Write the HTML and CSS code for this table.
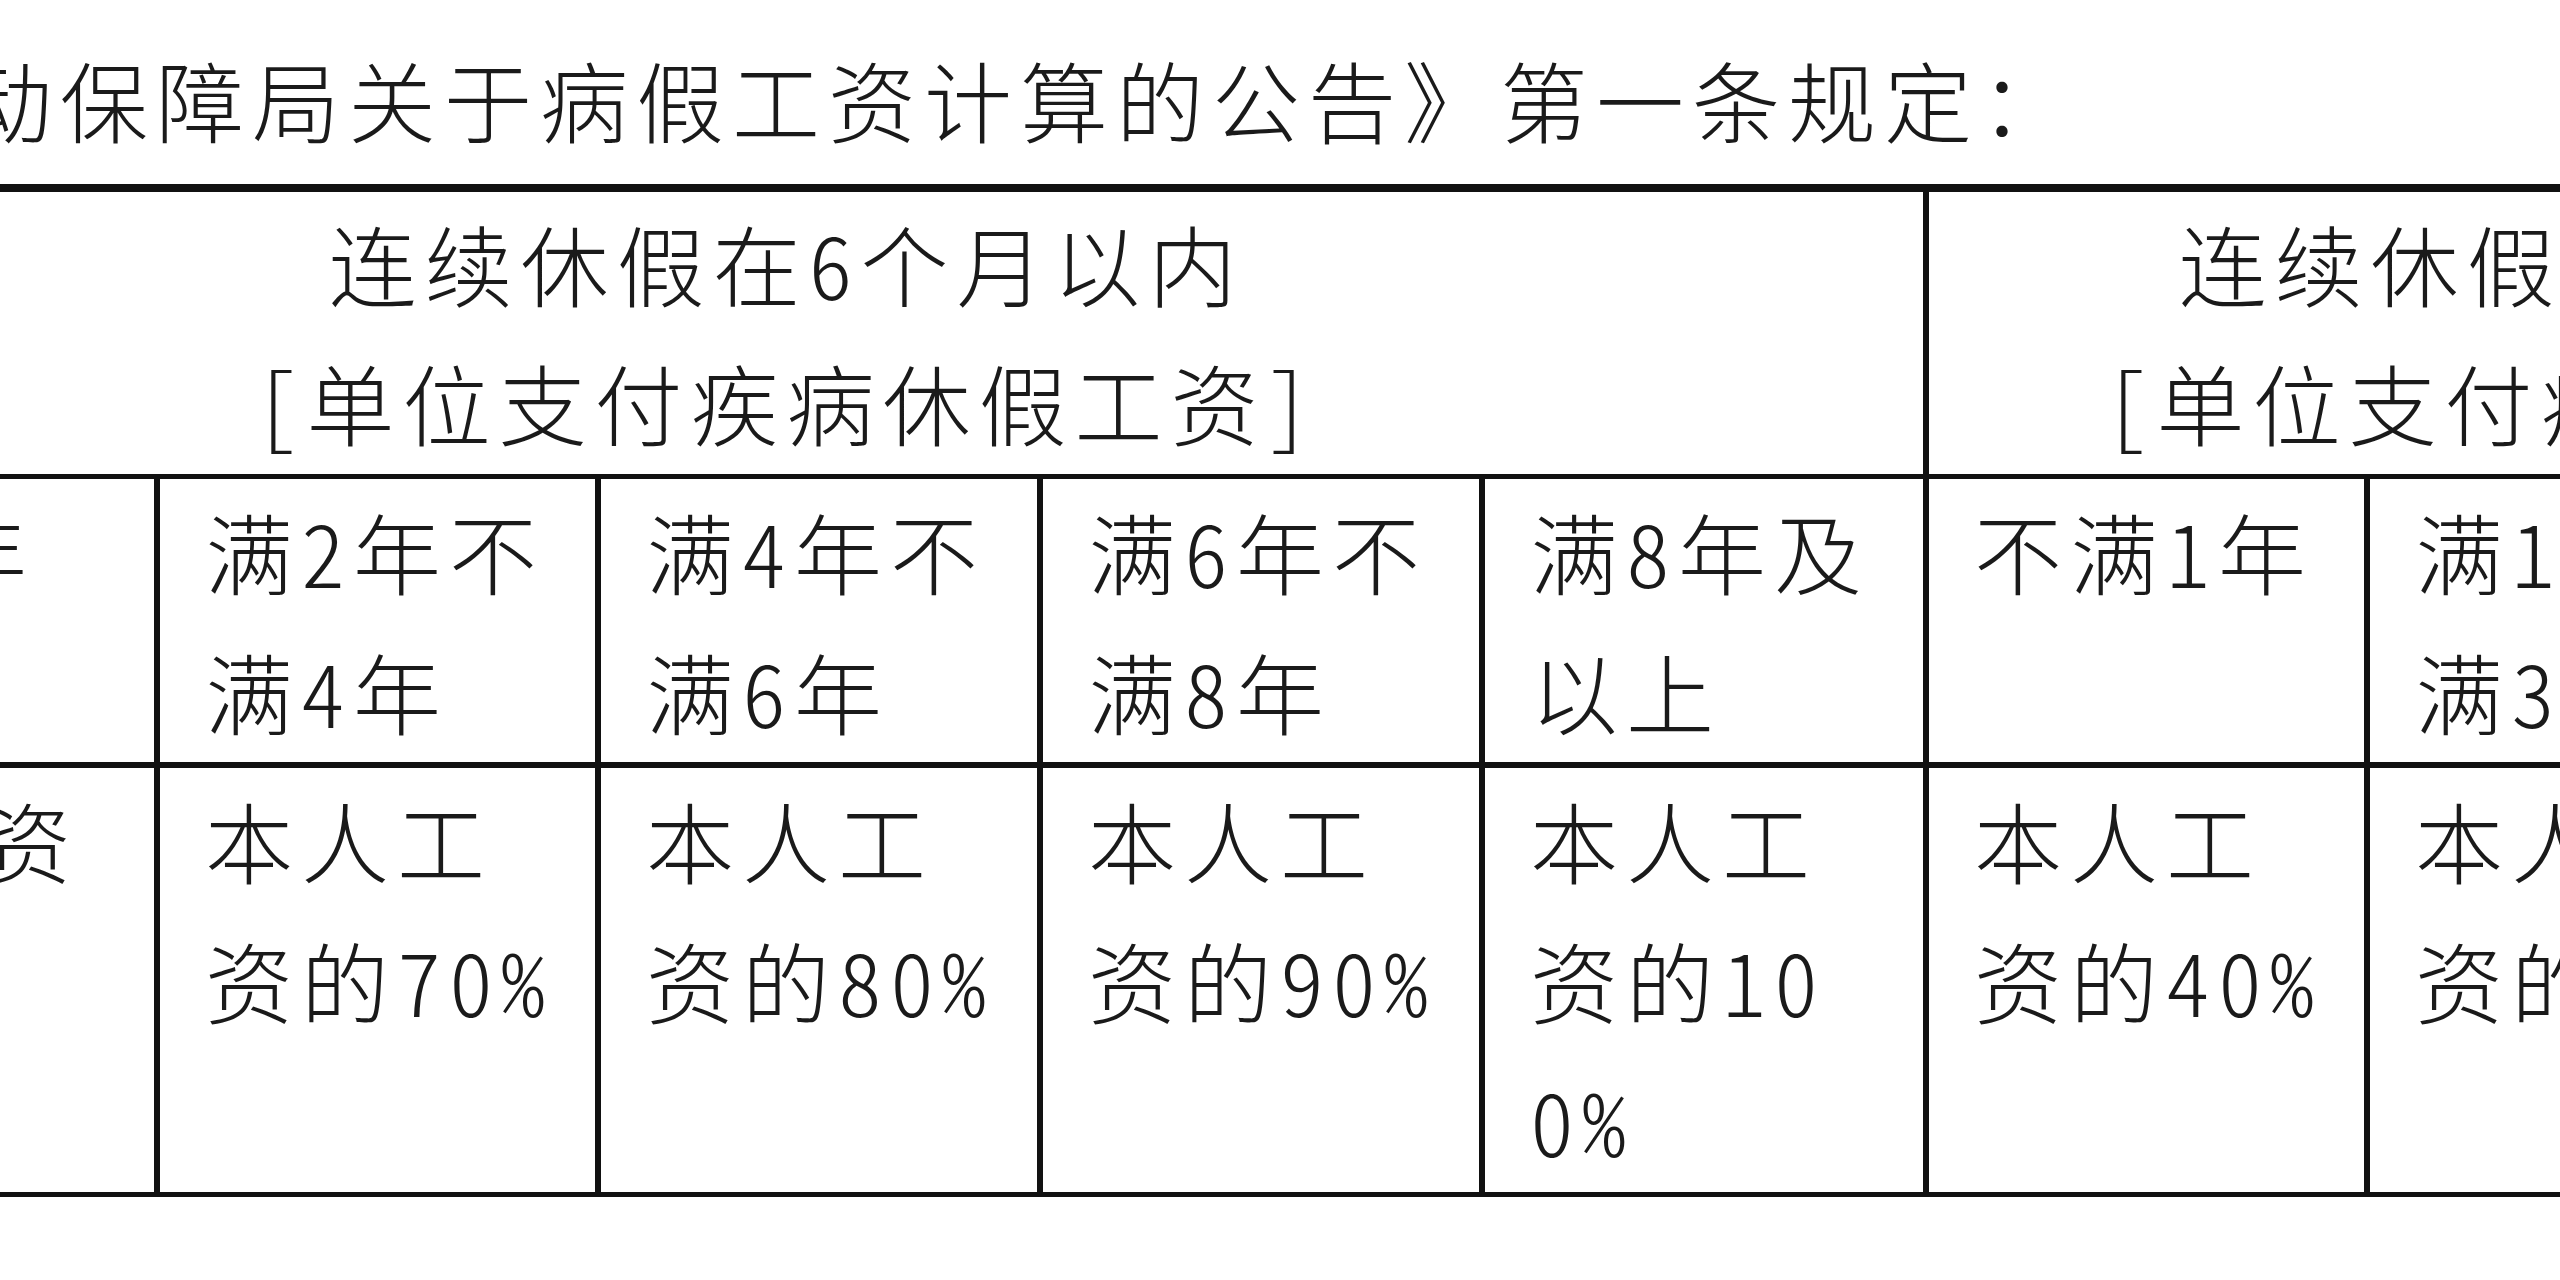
FILE: index.html
```html
<!DOCTYPE html>
<html lang="zh-CN">
<head>
<meta charset="utf-8">
<title>病假工资计算</title>
<link rel="stylesheet" href="styles.css">
</head>
<body>
<div class="page">
  <p class="lead">根据《上海市劳动保障局关于病假工资计算的公告》第一条规定：</p>
  <div class="sheet">
    <div class="cell group span5">连续休假在6个月以内<br>[单位支付疾病休假工资]</div>
    <div class="cell group span3">连续休假超过6个月<br>[单位支付疾病救济费]</div>

    <div class="cell r2">不满2年</div>
    <div class="cell r2">满2年不<br>满4年</div>
    <div class="cell r2">满4年不<br>满6年</div>
    <div class="cell r2">满6年不<br>满8年</div>
    <div class="cell r2">满8年及<br>以上</div>
    <div class="cell r2">不满1年</div>
    <div class="cell r2">满1年不<br>满3年</div>
    <div class="cell r2">满3年及<br>以上</div>

    <div class="cell r3">本人工资<br>的60%</div>
    <div class="cell r3">本人工<br>资的70%</div>
    <div class="cell r3">本人工<br>资的80%</div>
    <div class="cell r3">本人工<br>资的90%</div>
    <div class="cell r3">本人工<br>资的10<br>0%</div>
    <div class="cell r3">本人工<br>资的40%</div>
    <div class="cell r3">本人工<br>资的50%</div>
    <div class="cell r3">本人工<br>资的60%</div>
  </div>
</div>
</body>
</html>
```

FILE: styles.css
```css
html, body {
  margin: 0;
  padding: 0;
  background: #ffffff;
  overflow: hidden;
}

body {
  width: 2560px;
  height: 1280px;
  font-family: "Noto Sans CJK SC", "Noto Sans CJK JP", sans-serif;
  font-weight: 300;
  font-size: 88px;
  letter-spacing: 8px;
  color: #1a1a1a;
  font-feature-settings: "hwid" 1;
}

.page {
  display: flex;
  flex-direction: column;
}

.lead {
  margin: 28px 0 0 -708px;
  height: 140px;
  line-height: 140px;
  white-space: nowrap;
}

.sheet {
  margin: 16px 0 0 -350px;
  width: max-content;
  display: grid;
  grid-template-columns: 510px 441px 442px 442px 444px 441px 442px 442px;
  grid-template-rows: 287px 289px 429px;
  border-top: 8px solid #111;
}

.cell {
  box-sizing: border-box;
  border-right: 6px solid #111;
  white-space: nowrap;
  line-height: 140px;
}

.group {
  border-bottom: 5px solid #111;
  text-align: center;
  line-height: 139px;
  padding-top: 0;
}

.span5 { grid-column: span 5; }
.span3 { grid-column: span 3; }

.r2 {
  border-bottom: 6px solid #111;
  padding: 1px 0 0 45px;
}

.r3 {
  border-bottom: 5px solid #111;
  padding: 1px 0 0 45px;
}
```
